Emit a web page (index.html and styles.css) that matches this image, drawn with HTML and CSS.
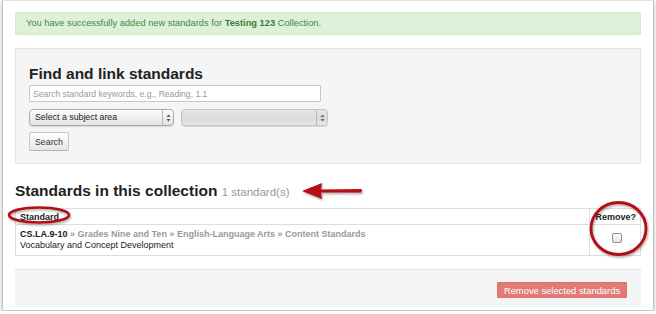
FILE: index.html
```html
<!DOCTYPE html>
<html lang="en">
<head>
  <meta charset="UTF-8" />
  <title>Standards</title>
  <link rel="stylesheet" href="styles.css">
</head>
<body>
  <div class="frame">
    <div class="alert">You have successfully added new standards for <b>Testing 123</b> Collection.</div>

    <div class="well">
      <h3>Find and link standards</h3>
      <input type="text" class="search-input" placeholder="Search standard keywords, e.g., Reading, 1.1">
      <div class="select-row">
        <div class="select subject">
          <span class="select-label">Select a subject area</span>
          <span class="select-arrows">
            <svg width="5" height="8" viewBox="0 0 5 8"><path d="M2.5 0.5 L4.5 3 L0.5 3 Z M2.5 7.5 L4.5 5 L0.5 5 Z" fill="#555"/></svg>
          </span>
        </div>
        <div class="select grade">
          <span class="select-label"></span>
          <span class="select-arrows">
            <svg width="5" height="8" viewBox="0 0 5 8"><path d="M2.5 0.5 L4.5 3 L0.5 3 Z M2.5 7.5 L4.5 5 L0.5 5 Z" fill="#666"/></svg>
          </span>
        </div>
      </div>
      <button class="btn">Search</button>
    </div>

    <h3 class="collection-title">Standards in this collection <small>1 standard(s)</small></h3>

    <table class="standards">
      <thead>
        <tr>
          <th class="col-standard">Standard</th>
          <th class="col-remove">Remove?</th>
        </tr>
      </thead>
      <tbody>
        <tr>
          <td class="col-standard">
            <div class="path"><span class="code">CS.LA.9-10</span> &raquo; Grades Nine and Ten &raquo; English-Language Arts &raquo; Content Standards</div>
            <div>Vocabulary and Concept Development</div>
          </td>
          <td class="col-remove"><span class="checkbox"></span></td>
        </tr>
      </tbody>
    </table>

    <div class="form-actions">
      <button class="btn-danger">Remove selected standards</button>
    </div>
  </div>

  <svg class="notes" width="656" height="314" viewBox="0 0 656 314">
    <defs>
      <filter id="shade" x="-20%" y="-20%" width="140%" height="140%">
        <feDropShadow dx="1" dy="1.5" stdDeviation="1" flood-color="#000" flood-opacity="0.35"/>
      </filter>
    </defs>
    <g filter="url(#shade)">
      <ellipse cx="39" cy="215" rx="30" ry="7.5" fill="none" stroke="#b50d12" stroke-width="2.6"/>
      <ellipse cx="618.5" cy="228.5" rx="27.5" ry="26" fill="none" stroke="#b50d12" stroke-width="2.8"/>
      <path d="M302 191 L322 183 L321 189.5 L361 189 Q363 190.5 361 192.5 L321 192.5 L322 199 Z" fill="#b50d12"/>
    </g>
  </svg>
</body>
</html>
```

FILE: styles.css
```css
body {
  margin: 0;
  background: #fff;
  font-family: "Liberation Sans", Arial, sans-serif;
  color: #333;
}
.frame {
  margin-left: 2px;
  width: 626px;
  padding: 11px 12px 3px 12px;
  border: 1px solid #c6c6c6;
  border-top-color: #e4e4e4;
  box-shadow: 0 1px 3px rgba(0, 0, 0, 0.35);
  background: #fff;
}
.alert {
  height: 21px;
  line-height: 21px;
  padding-left: 10px;
  font-size: 9.3px;
  color: #468847;
  background-color: #dff0d8;
  border: 1px solid #d6e9c6;
  border-radius: 2px;
}
.alert b {
  color: #3c7a3c;
}
.well {
  margin-top: 13px;
  height: 98px;
  padding: 16px 13px 0 13px;
  background-color: #f5f5f5;
  border: 1px solid #e3e3e3;
  border-radius: 2px;
}
h3 {
  margin: 0;
  font-size: 15.5px;
  line-height: 18px;
  font-weight: bold;
  color: #222;
}
.search-input {
  display: block;
  box-sizing: border-box;
  margin-top: 2px;
  width: 292px;
  height: 17px;
  padding: 0 3px;
  border: 1px solid #c8c8c8;
  border-radius: 1px;
  background: #fff;
  font-family: "Liberation Sans", Arial, sans-serif;
  font-size: 8.6px;
}
.search-input::placeholder {
  color: #999;
}
.select-row {
  display: flex;
  gap: 7px;
  margin-top: 7px;
}
.select {
  box-sizing: border-box;
  height: 17px;
  display: flex;
  align-items: stretch;
  border: 1px solid #a9a9a9;
  border-radius: 4px;
  background: linear-gradient(#fbfbfb, #e4e4e4);
  box-shadow: 0 1px 1px rgba(0, 0, 0, 0.12);
}
.select.subject {
  width: 145px;
}
.select.grade {
  width: 147px;
  border-color: #c4c4c4;
  background: linear-gradient(#e6e6e6, #dadada 60%, #e8e8e8);
}
.select-label {
  flex: 1;
  padding-left: 5px;
  font-size: 8.8px;
  line-height: 15px;
  color: #222;
}
.select-arrows {
  width: 10px;
  display: flex;
  align-items: center;
  justify-content: center;
  border-left: 1px solid #b8b8b8;
}
.btn {
  display: block;
  margin-top: 6px;
  height: 19px;
  padding: 0 5px;
  font-family: "Liberation Sans", Arial, sans-serif;
  font-size: 8.8px;
  color: #333;
  background: linear-gradient(#ffffff, #e6e6e6);
  border: 1px solid #c8c8c8;
  border-bottom-color: #b3b3b3;
  border-radius: 2px;
}
.collection-title {
  margin-top: 18px;
}
.collection-title small {
  font-size: 11.5px;
  font-weight: normal;
  color: #999;
}
.standards {
  margin-top: 7px;
  width: 100%;
  border-collapse: collapse;
  border: 1px solid #dddddd;
  font-size: 9px;
  color: #222;
}
.standards th {
  height: 15px;
  padding: 0 4px;
  font-weight: bold;
  text-align: left;
  vertical-align: middle;
  border-bottom: 1px solid #dddddd;
}
.standards td {
  padding: 0 4px;
  vertical-align: top;
  line-height: 10.5px;
}
.standards td.col-standard {
  height: 26px;
  padding-top: 4px;
}
.standards .col-remove {
  width: 38px;
  border-left: 1px solid #dddddd;
  text-align: right;
}
.path {
  font-weight: bold;
  color: #999;
}
.path .code {
  color: #222;
}
.standards td.col-remove {
  height: 22px;
  text-align: center;
  padding-top: 8px;
  padding-left: 8px;
}
.checkbox {
  display: inline-block;
  width: 8px;
  height: 8px;
  border: 1px solid #8f8f8f;
  border-radius: 2px;
  background: linear-gradient(#fdfdfd, #e4e4e4);
}
.form-actions {
  margin-top: 13px;
  height: 25px;
  padding: 12px 14px 0 0;
  display: flex;
  justify-content: flex-end;
  align-items: flex-start;
  background-color: #f5f5f5;
  border-top: 1px solid #e5e5e5;
}
.btn-danger {
  height: 16px;
  width: 130px;
  padding: 0;
  font-family: "Liberation Sans", Arial, sans-serif;
  font-size: 9.4px;
  color: #fff;
  background-color: #e07b77;
  border: 1px solid #d8726e;
  border-radius: 1px;
}
.notes {
  position: absolute;
  left: 0;
  top: 0;
  pointer-events: none;
}
```
